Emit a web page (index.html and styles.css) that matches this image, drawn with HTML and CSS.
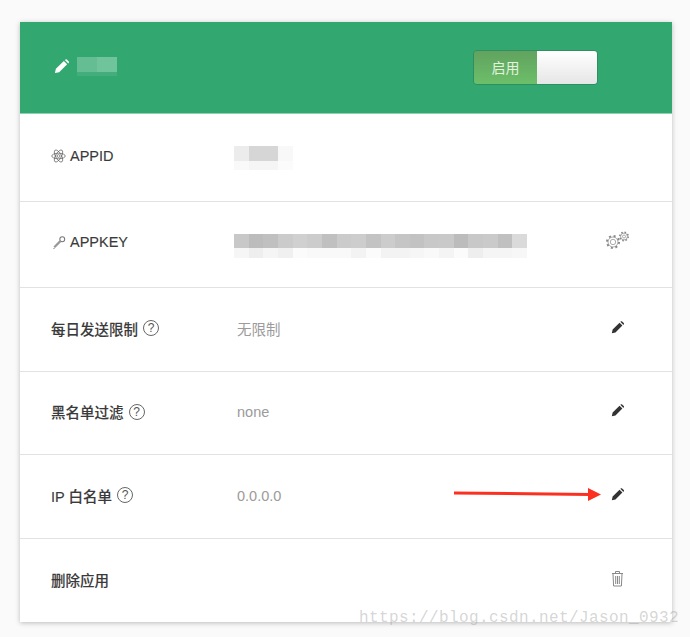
FILE: index.html
```html
<!DOCTYPE html>
<html lang="en">

<head>
    <meta charset="UTF-8">
    <title>应用设置</title>
    <link rel="stylesheet" href="styles.css">
</head>

<body>
    <div class="app-card">
        <div class="app-header">
            <div class="app-name">
                <svg class="icon-pencil" width="15" height="15" viewBox="0 0 16 16"><path d="M1 15l1-4.500 8.500-8.500 3.500 3.500-8.500 8.500zM11.500 1l1-.6q.7-.3 1.200.2l2 2q.5.500.2 1.200l-.6 1z" fill="#fff"/></svg>
                <div class="mosaic mosaic-name">
                    <div class="mosaic-top"></div>
                    <div class="mosaic-bottom"></div>
                </div>
            </div>
            <div class="switch">
                <span class="switch-on">启用</span>
                <span class="switch-knob"></span>
            </div>
        </div>

        <div class="row row-id">
            <div class="row-label">
                <svg class="icon-small" width="15" height="16" viewBox="0 0 16 16" fill="none" stroke="#666" stroke-width=".8"><ellipse cx="8" cy="8" rx="7.200" ry="3"/><ellipse cx="8" cy="8" rx="7.200" ry="3" transform="rotate(60 8 8)"/><ellipse cx="8" cy="8" rx="7.200" ry="3" transform="rotate(120 8 8)"/><circle cx="8" cy="8" r="1.500"/></svg>
                <span>APPID</span>
            </div>
            <div class="row-value">
                <div class="mosaic mosaic-id">
                    <div class="mosaic-top"></div>
                    <div class="mosaic-bottom"></div>
                </div>
            </div>
        </div>

        <div class="row row-key">
            <div class="row-label">
                <svg class="icon-small" width="15" height="15" viewBox="0 0 16 16" fill="none"><circle cx="12" cy="4.500" r="2.600" stroke="#777" stroke-width="1.100"/><path d="M10 6.500L3.500 13" stroke="#999" stroke-width="2.400"/><path d="M2.500 14.500l1.500-.5" stroke="#888" stroke-width="1"/></svg>
                <span>APPKEY</span>
            </div>
            <div class="row-value">
                <div class="mosaic mosaic-key">
                    <div class="mosaic-top"></div>
                    <div class="mosaic-bottom"></div>
                </div>
            </div>
            <svg class="row-action icon-gears" width="25" height="20" viewBox="0 0 25 20" fill="none" stroke="#888" stroke-width=".7"><circle cx="7" cy="11" r="6" stroke-dasharray="2 2.700" stroke-width="2"/><circle cx="7" cy="11" r="5"/><circle cx="7" cy="11" r="2.700"/><circle cx="18" cy="5.500" r="4.200" stroke-dasharray="1.600 1.700" stroke-width="1.600"/><circle cx="18" cy="5.500" r="3.400"/><circle cx="18" cy="5.500" r="1.500"/></svg>
        </div>

        <div class="row">
            <div class="row-label"><span>每日发送限制</span><span class="help">?</span></div>
            <div class="row-value muted">无限制</div>
            <svg class="row-action" width="13" height="13" viewBox="0 0 16 16"><path d="M1 15l1-4.500 8.500-8.500 3.500 3.500-8.500 8.500zM11.500 1l1-.6q.7-.3 1.200.2l2 2q.5.500.2 1.200l-.6 1z" fill="#333"/></svg>
        </div>

        <div class="row">
            <div class="row-label"><span>黑名单过滤</span><span class="help">?</span></div>
            <div class="row-value muted">none</div>
            <svg class="row-action" width="13" height="13" viewBox="0 0 16 16"><path d="M1 15l1-4.500 8.500-8.500 3.500 3.500-8.500 8.500zM11.500 1l1-.6q.7-.3 1.200.2l2 2q.5.500.2 1.200l-.6 1z" fill="#333"/></svg>
        </div>

        <div class="row">
            <div class="row-label"><span>IP 白名单</span><span class="help">?</span></div>
            <div class="row-value muted">0.0.0.0</div>
            <svg class="row-action" width="13" height="13" viewBox="0 0 16 16"><path d="M1 15l1-4.500 8.500-8.500 3.500 3.500-8.500 8.500zM11.500 1l1-.6q.7-.3 1.200.2l2 2q.5.500.2 1.200l-.6 1z" fill="#333"/></svg>
        </div>

        <div class="row">
            <div class="row-label"><span>删除应用</span></div>
            <div class="row-value"></div>
            <svg class="row-action" width="13" height="17" viewBox="0 0 13 17" fill="none" stroke="#888" stroke-width="1"><path d="M1 3.500h11M4.500 3V1.500h4V3M2 4l.6 12h7.800L11 4M4.700 6v8M6.500 6v8M8.300 6v8"/></svg>
        </div>
    </div>

    <!-- annotation drawn on top of the screenshot -->
    <svg class="arrow" width="152" height="16" viewBox="0 0 152 16"><path d="M0 5.500l136 1.500v3L0 8.500z" fill="#fb3020"/><path d="M134 2l13 6.500-13 6.500z" fill="#fb3020"/></svg>
    <div class="watermark">https://blog.csdn.net/Jason_0932</div>
</body>

</html>
```

FILE: styles.css
```css
* {
    box-sizing: border-box;
}

body {
    margin: 0;
    width: 690px;
    height: 637px;
    padding: 22px 18px 15px 20px;
    position: relative;
    overflow: hidden;
    background-color: #fafafa;
    font-family: "Liberation Sans", "Noto Sans CJK SC", sans-serif;
    color: #333333;
}

.app-card {
    height: 600px;
    background-color: #ffffff;
    box-shadow: 0 1px 5px rgba(0, 0, 0, 0.25);
}

.app-header {
    height: 92px;
    display: flex;
    justify-content: space-between;
    align-items: center;
    padding: 0 74px 0 34px;
    background-color: #33a770;
    border-bottom: 1px solid #8fd0b0;
}

.app-name {
    display: flex;
    align-items: center;
    gap: 8px;
    margin-bottom: 2px;
}

.switch {
    width: 125px;
    height: 35px;
    display: flex;
    border: 1px solid #2f8f63;
    border-radius: 4px;
    overflow: hidden;
}

.switch-on {
    width: 63px;
    padding-bottom: 2px;
    display: flex;
    justify-content: center;
    align-items: center;
    font-size: 14px;
    color: #e4f3df;
    background: linear-gradient(#61a25f, #6cbf6a);
}

.switch-knob {
    flex: 1;
    background: linear-gradient(#ffffff, #e6e6e6);
}

.row {
    height: 83.5px;
    display: flex;
    align-items: center;
    padding: 0 48px 0 31px;
    border-bottom: 1px solid #e2e2e2;
    font-size: 14.5px;
}

.row:last-child {
    border-bottom: none;
}

.row-id {
    height: 88px;
}

.row-key {
    height: 86px;
}

.row-label {
    width: 186px;
    display: flex;
    align-items: center;
    gap: 4px;
    font-weight: 500;
    margin-bottom: 2px;
    color: #3a3a3a;
    -webkit-text-stroke: 0.1px #3a3a3a;
}

.row-id .row-label {
    margin-bottom: 3px;
}

.row-key .row-label {
    margin-bottom: 5px;
}

.row-value {
    flex: 1;
}

.muted {
    color: #9b9b9b;
    margin-bottom: 1px;
}

.help {
    width: 16px;
    height: 16px;
    margin-left: 1px;
    display: flex;
    justify-content: center;
    align-items: center;
    border: 1px solid #666666;
    border-radius: 50%;
    font-size: 12px;
    font-weight: normal;
    color: #555555;
    -webkit-text-stroke: 0;
}

.row-action {
    flex: none;
    margin-bottom: 4px;
}

.icon-small {
    flex: none;
}

.icon-gears {
    margin-right: -7px;
    margin-bottom: 8px;
}

/* blurred-out values, 14.6px cells drawn as hard colour stops */
.mosaic-top {
    height: 15px;
}

.mosaic-bottom {
    height: 9px;
}

.mosaic-name {
    width: 40px;
}

.mosaic-name .mosaic-top {
    background: linear-gradient(90deg, #65bd93 50%, #6fc49c 50%);
}

.mosaic-name .mosaic-bottom {
    height: 4px;
    background-color: #44ad7c;
}

.mosaic-id {
    width: 59px;
    margin-left: -3px;
}

.mosaic-id .mosaic-top {
    background: linear-gradient(90deg, #ececec 25%, #d6d6d6 25% 75%, #f8f8f8 75%);
}

.mosaic-id .mosaic-bottom {
    background: linear-gradient(90deg, #f9f9f9 25%, #f5f5f5 25% 75%, #fbfbfb 75%);
}

.mosaic-key {
    width: 293px;
    margin: 3px 0 0 -3px;
}

.mosaic-key .mosaic-top {
    height: 14px;
    background: linear-gradient(90deg,
        #c8c8c8 5%, #bcbcbc 5% 10%, #c0c0c0 10% 15%, #cbcbcb 15% 20%, #d0d0d0 20% 25%,
        #cccccc 25% 30%, #c0c0c0 30% 35%, #cbcbcb 35% 40%, #cdcdcd 40% 45%, #c3c3c3 45% 50%,
        #cccccc 50% 55%, #c5c5c5 55% 60%, #c2c2c2 60% 65%, #c8c8c8 65% 70%, #c9c9c9 70% 75%,
        #bcbcbc 75% 80%, #c8c8c8 80% 85%, #cacaca 85% 90%, #c0c0c0 90% 95%, #dadada 95%);
}

.mosaic-key .mosaic-bottom {
    height: 10px;
    background: linear-gradient(90deg,
        #f6f6f6 5%, #eeeeee 5% 10%, #f5f5f5 10% 15%, #f0f0f0 15% 20%, #fbfbfb 20% 25%,
        #f9f9f9 25% 40%, #f3f3f3 40% 45%, #fbfbfb 45% 50%, #f3f3f3 50% 60%, #f6f6f6 60% 65%,
        #f9f9f9 65% 70%, #f4f4f4 70% 75%, #fbfbfb 75% 80%, #eeeeee 80% 85%, #f5f5f5 85% 95%, #f7f7f7 95%);
}

.arrow {
    position: absolute;
    left: 454px;
    top: 486px;
}

.watermark {
    position: absolute;
    left: 359px;
    top: 609px;
    font-family: "Liberation Mono", monospace;
    font-size: 16px;
    letter-spacing: 0.4px;
    color: rgba(150, 150, 150, 0.4);
}
```
